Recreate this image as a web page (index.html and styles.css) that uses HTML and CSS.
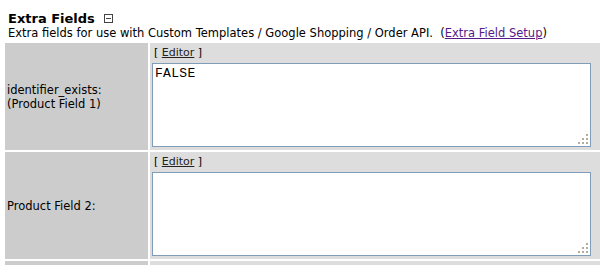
FILE: index.html
```html
<!DOCTYPE html>
<html lang="en">
<head>
    <meta charset="UTF-8">
    <title>Extra Fields</title>
    <link rel="stylesheet" href="styles.css">
</head>
<body>
    <!-- Section header -->
    <div class="section-head">
        <h2 class="section-title">Extra Fields <span class="toggle-box"></span></h2>
        <p class="section-note">Extra fields for use with Custom Templates / Google Shopping / Order API.&nbsp; (<a href="#" class="setup-link">Extra Field Setup</a>)</p>
    </div>

    <!-- Fields table -->
    <table class="fields-table">
        <tr>
            <td class="field-label">identifier_exists:<br>(Product Field 1)</td>
            <td class="field-value">
                <div class="editor-bar">[ <a href="#">Editor</a> ]</div>
                <div class="text-wrap">
                    <textarea class="field-text">FALSE</textarea>
                    <span class="grip"></span>
                </div>
            </td>
        </tr>
        <tr>
            <td class="field-label">Product Field 2:</td>
            <td class="field-value">
                <div class="editor-bar">[ <a href="#">Editor</a> ]</div>
                <div class="text-wrap">
                    <textarea class="field-text"></textarea>
                    <span class="grip"></span>
                </div>
            </td>
        </tr>
        <tr class="next-row">
            <td class="field-label"></td>
            <td class="field-value"></td>
        </tr>
    </table>
</body>
</html>
```

FILE: styles.css
```css
/* ----- Base ----- */
body {
    margin: 0;
    background: #FFFFFF;
    color: #000000;
    font-family: "DejaVu Sans", Verdana, sans-serif;
    font-size: 11.5px;
    overflow: hidden;
}

/* ----- Header ----- */
.section-head {
    padding: 11px 0 0 8px;
}

.section-title {
    margin: 0;
    font-size: 13px;
    font-weight: bold;
    line-height: 15px;
}

.toggle-box {
    display: inline-block;
    width: 7px;
    height: 7px;
    margin-left: 5px;
    border: 1px solid #444;
    position: relative;
    vertical-align: 0;
}

.toggle-box::after {
    content: '';
    position: absolute;
    left: 1px;
    top: 3px;
    width: 5px;
    height: 1px;
    background: #444;
}

.section-note {
    margin: 0;
    line-height: 14px;
}

.setup-link {
    color: #551A8B;
}

/* ----- Fields Table ----- */
.fields-table {
    margin-left: 3px;
    margin-top: 1px;
    width: 599px;
    border-spacing: 2px;
}

.fields-table td {
    padding: 0;
}

.field-label {
    width: 141px;
    padding: 0 0 0 2px !important;
    background: #CCCCCC;
    vertical-align: middle;
    line-height: 14px;
}

.field-value {
    background: #DDDDDD;
    padding: 3px 9px 3px 2px !important;
    vertical-align: top;
}

.next-row td {
    height: 20px;
}

.editor-bar {
    padding-left: 2px;
    line-height: 13px;
    margin-bottom: 4px;
    font-size: 11px;
}

.editor-bar a {
    color: #222222;
}

.text-wrap {
    position: relative;
    line-height: 0;
}

.field-text {
    display: block;
    box-sizing: border-box;
    width: 439px;
    height: 84px;
    margin: 0;
    padding: 2px 2px;
    border: 1px solid #7F9DB9;
    background: #FFFFFF;
    font-family: "Liberation Mono", "Courier New", monospace;
    font-size: 13px;
    line-height: 15px;
    letter-spacing: 0.3px;
    resize: none;
    outline: none;
}

/* resize grip drawn over the textarea corner */
.grip {
    position: absolute;
    right: 3px;
    bottom: 3px;
    width: 10px;
    height: 10px;
    background:
        linear-gradient(#B3AE9C, #B3AE9C) 8px 0 / 2px 2px no-repeat,
        linear-gradient(#B3AE9C, #B3AE9C) 4px 4px / 2px 2px no-repeat,
        linear-gradient(#B3AE9C, #B3AE9C) 8px 4px / 2px 2px no-repeat,
        linear-gradient(#B3AE9C, #B3AE9C) 0 8px / 2px 2px no-repeat,
        linear-gradient(#B3AE9C, #B3AE9C) 4px 8px / 2px 2px no-repeat,
        linear-gradient(#B3AE9C, #B3AE9C) 8px 8px / 2px 2px no-repeat;
}
```
